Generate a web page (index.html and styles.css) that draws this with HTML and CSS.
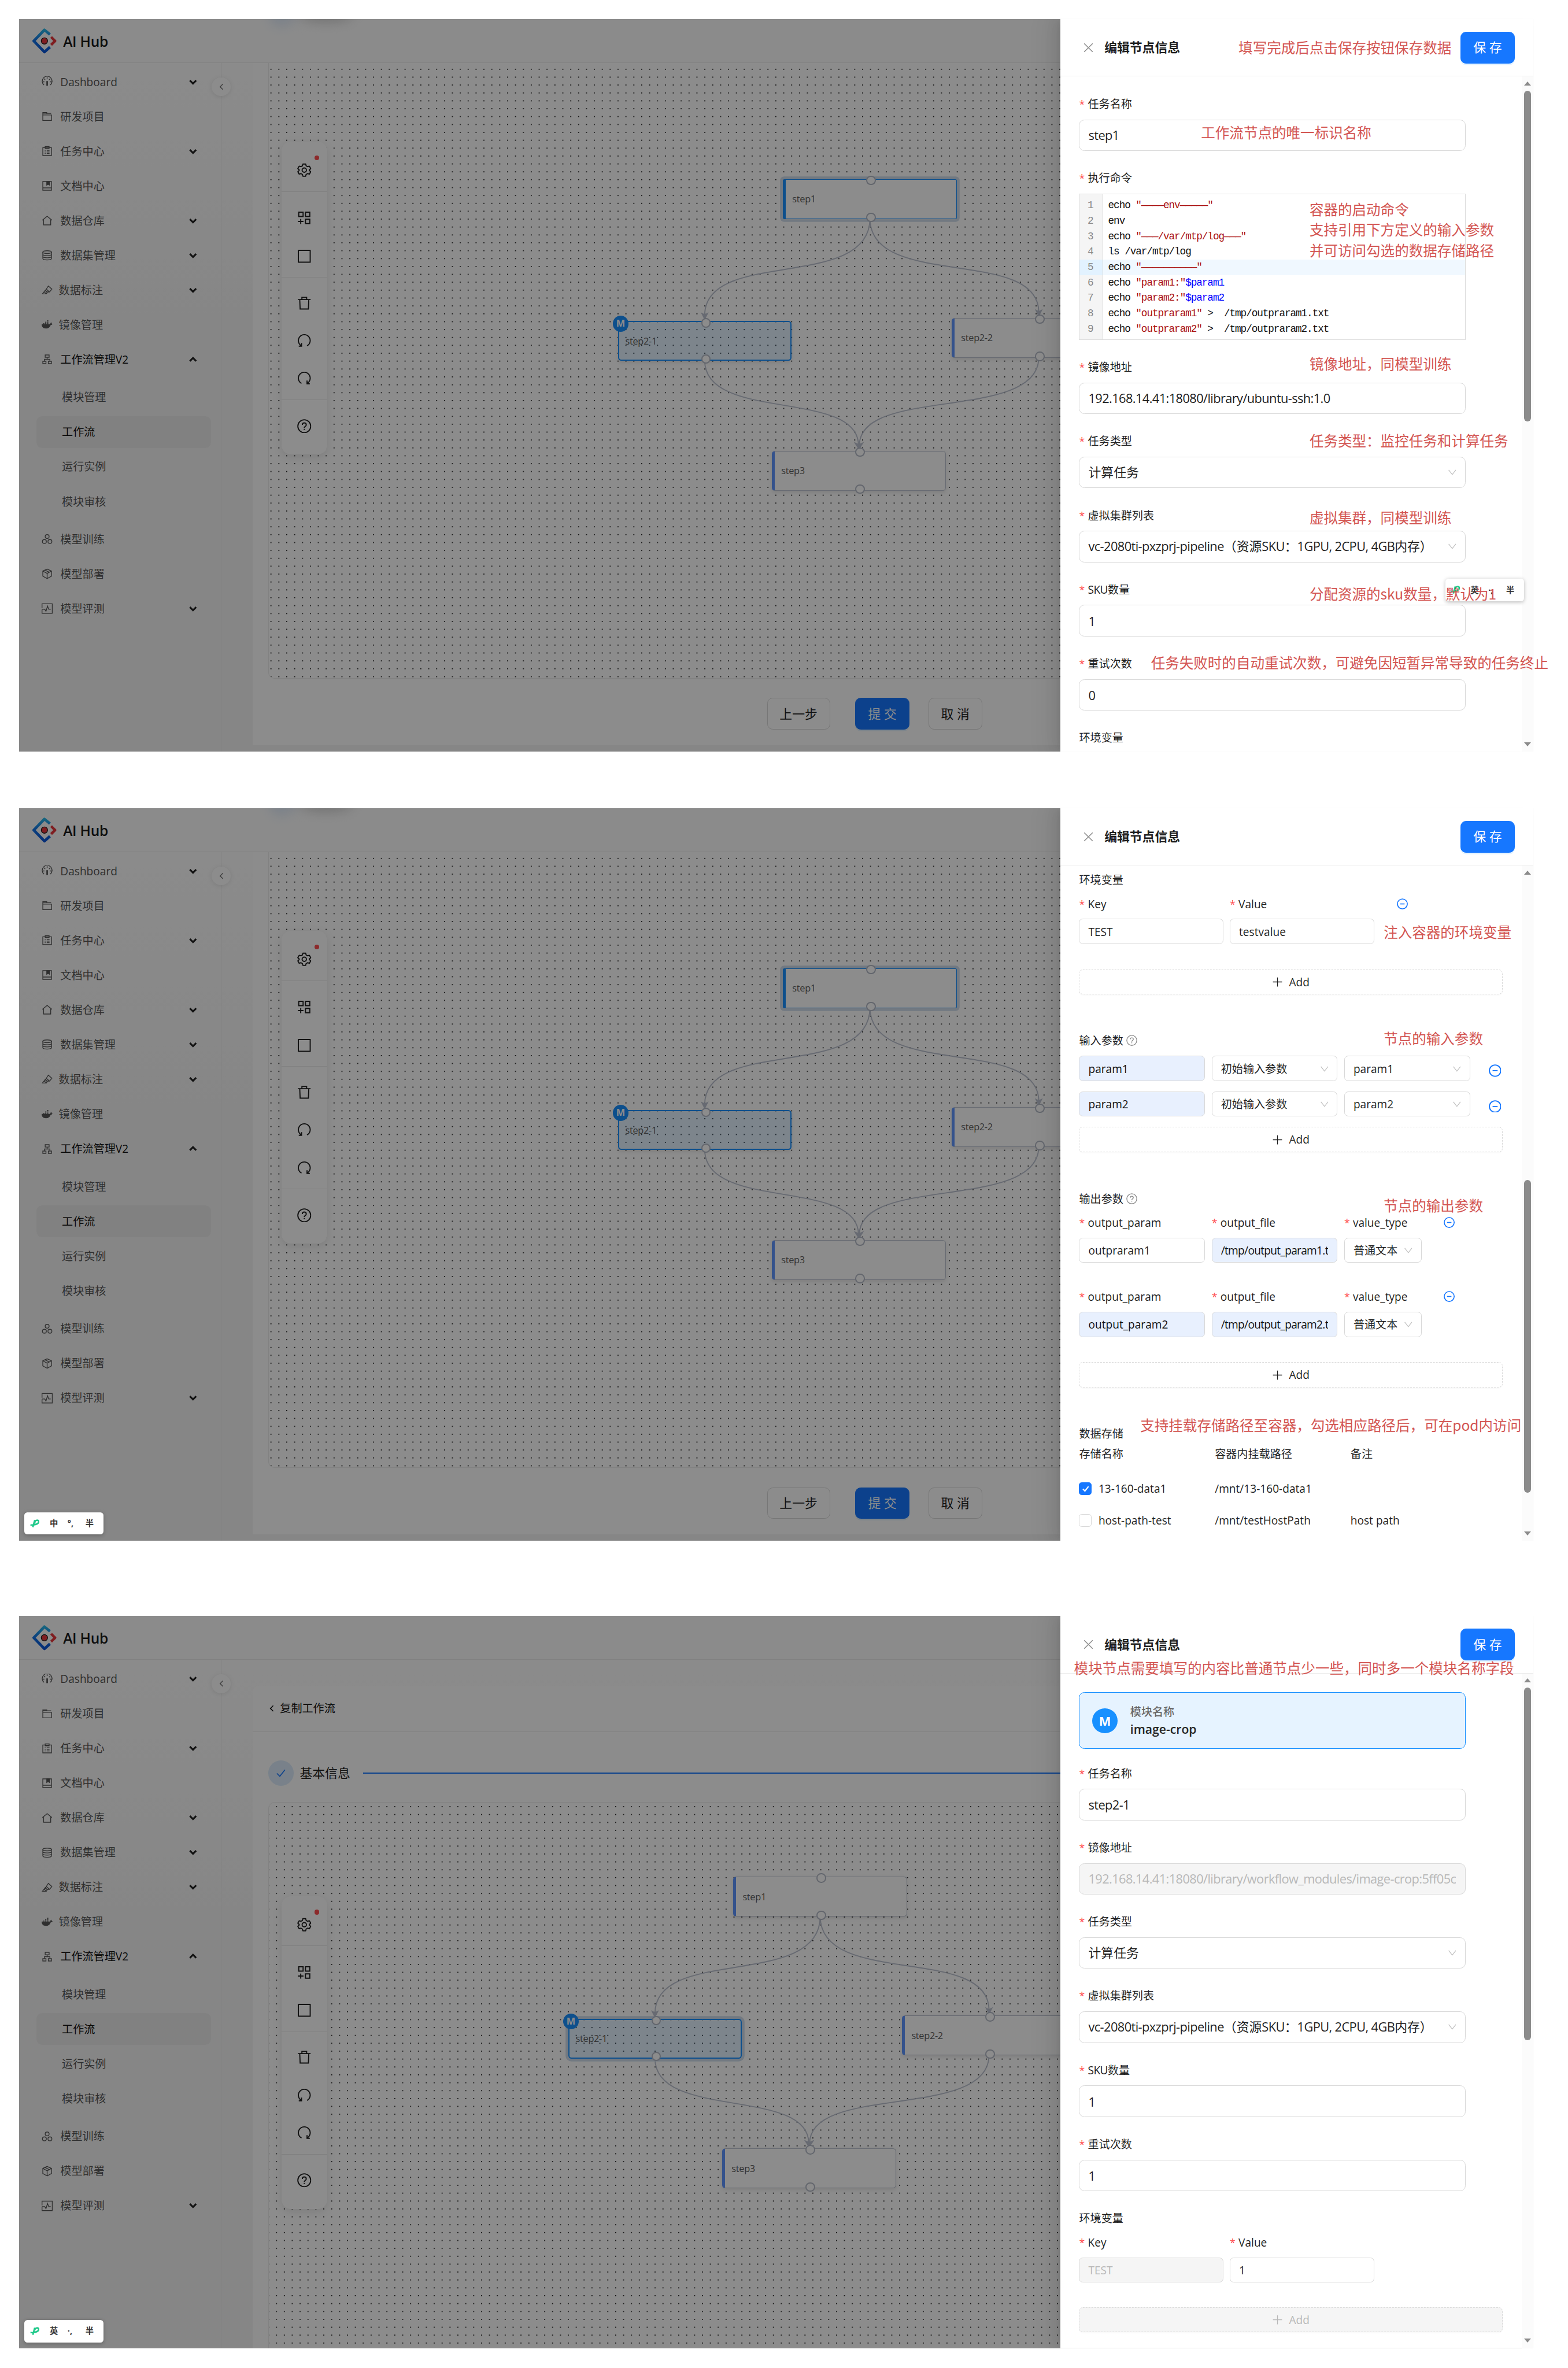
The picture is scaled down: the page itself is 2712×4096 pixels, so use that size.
FILE: index.html
```html
<!DOCTYPE html>
<html lang="zh-CN">
<head>
<meta charset="utf-8">
<title>AI Hub</title>
<link rel="stylesheet" href="styles.css">
</head>
<body>
<svg class="defs" width="0" height="0" aria-hidden="true">
  <defs>
    <linearGradient id="logo-blue" x1="0" y1="0" x2="0" y2="1"><stop offset="0" stop-color="#2bb8e8"/><stop offset=".45" stop-color="#1677e6"/><stop offset="1" stop-color="#0a55d8"/></linearGradient>
    <pattern id="dots" x="4" y="14.5" width="20" height="20" patternUnits="userSpaceOnUse"><rect width="1.6" height="1.6" fill="#c6c6c6"/></pattern>
    <symbol id="i-logo" viewBox="0 0 64 64"><g fill="none" stroke-linejoin="round"><path d="M46 15.500L32 4 5 32l27 28 14-12.500" stroke="url(#logo-blue)" stroke-width="7"/><path d="M49 22l10 10-10 10" stroke="#e8383d" stroke-width="6.500"/></g><circle cx="32" cy="32" r="8" fill="#e8383d"/></symbol>
    <symbol id="i-dash" viewBox="0 0 28 28"><path d="M6 22A12.500 12.500 0 1 1 22 22M14 2v4M3 14h4M21 14h4M6 6l3 3M22 6l-3 3"/><path d="M14 12v12" stroke-width="4"/></symbol>
    <symbol id="i-folder" viewBox="0 0 28 28"><path d="M3 24V10h22v14zM2 10h24M3 10V4h10v2h11"/><path d="M3 5h10" stroke-width="3"/></symbol>
    <symbol id="i-task" viewBox="0 0 28 28"><path d="M3 5h22v20H3zM9 2h10v5H9zM8 12h2M13 12h7M8 16h2M13 16h7M8 20h2M13 20h7"/></symbol>
    <symbol id="i-book" viewBox="0 0 28 28"><path d="M3 3h22v22H3zM3 19h22"/><path d="M13 3h7v9l-3.500-2.500L13 12z" fill="currentColor"/></symbol>
    <symbol id="i-home" viewBox="0 0 28 28"><path d="M2 13L14 3l12 10M5 12v13h18V12"/></symbol>
    <symbol id="i-db" viewBox="0 0 28 28"><ellipse cx="14" cy="6" rx="11" ry="3.500"/><path d="M3 6v16c0 5 22 5 22 0V6M3 11.500c0 4.500 22 4.500 22 0M3 17c0 4.500 22 4.500 22 0"/></symbol>
    <symbol id="i-mark" viewBox="0 0 28 28"><path d="M17 4l9 8-6 7h-7l-3-4zM10 14l-8 10h10l3-5M12 12l8 7M7 19l4 4"/></symbol>
    <symbol id="i-docker" viewBox="0 0 28 28"><path d="M0 13h22c0-3 1-4 2-5 1 1 2 2 1.500 3.500L28 12c-1 2-3 3-5 3-2 6-6 9-12 9C4 24 0 20 0 13z" fill="currentColor" stroke="none"/><path d="M4 11.500h4M9 11.500h4M14 11.500h4M9 8h4M14 8h4M14 4.500h4" stroke-width="2.800" stroke-dasharray="3 1"/></symbol>
    <symbol id="i-flow" viewBox="0 0 28 28"><path d="M9 3h10v6H9zM3 19h8v6H3zM17 19h8v6h-8zM14 9v5M7 19v-5h14v5"/></symbol>
    <symbol id="i-balls" viewBox="0 0 28 28"><circle cx="14" cy="7.500" r="5"/><circle cx="7" cy="20" r="5"/><circle cx="21" cy="20" r="5"/></symbol>
    <symbol id="i-box" viewBox="0 0 28 28"><path d="M14 2l11 5v13l-11 6L3 20V7zM3 7l11 6 11-6M14 13v13M8.500 4.500l11 5.500"/></symbol>
    <symbol id="i-pulse" viewBox="0 0 28 28"><path d="M1 13V2h26v24H1v-9M1 16h7l3 5 4-13 3 8h5"/></symbol>
    <symbol id="i-down" viewBox="0 0 20 20"><path d="M2 6l8 8 8-8"/></symbol>
    <symbol id="i-up" viewBox="0 0 20 20"><path d="M2 14l8-8 8 8"/></symbol>
    <symbol id="i-left" viewBox="0 0 20 20"><path d="M14 2L6 10l8 8"/></symbol>
    <symbol id="i-gear" viewBox="0 0 36 36"><path d="M14.500 2.500h7l1.200 4.600 3.600 2.100 4.600-1.300 3.500 6-3.400 3.300v1.600l3.400 3.300-3.500 6-4.600-1.300-3.600 2.100-1.200 4.600h-7l-1.200-4.600-3.600-2.100-4.600 1.300-3.500-6L5 18.800v-1.600l-3.400-3.300 3.500-6 4.600 1.300 3.600-2.100z" stroke-linejoin="round"/><circle cx="18" cy="18" r="5.500"/></symbol>
    <symbol id="i-add" viewBox="0 0 36 36"><path d="M4 3h11v11H4zM21 3h11v11H21zM21 21h11v11H21zM9 20v13M2 26.500h14"/></symbol>
    <symbol id="i-rect" viewBox="0 0 36 36"><path d="M3 3h30v30H3z"/></symbol>
    <symbol id="i-trash" viewBox="0 0 36 36"><path d="M2 9h32M12 9V3.500h12V9M6.500 9l1 24h21l1-24"/></symbol>
    <symbol id="i-undo" viewBox="0 0 36 36"><path d="M11 31A15 15 0 1 1 25 31M11 24v8H4"/></symbol>
    <symbol id="i-redo" viewBox="0 0 36 36"><path d="M25 31A15 15 0 1 0 11 31M25 24v8h7"/></symbol>
    <symbol id="i-help" viewBox="0 0 36 36"><circle cx="18" cy="18" r="16.300"/><path d="M13 14.500c0-6.500 10-6.500 10 0 0 4-5 3.500-5 7.500M18 24.500v3"/></symbol>
    <symbol id="i-close" viewBox="0 0 28 28"><path d="M2 2l24 24M26 2L2 26"/></symbol>
    <symbol id="i-caret" viewBox="0 0 22 16"><path d="M1 1l10 13L21 1"/></symbol>
    <symbol id="i-plus" viewBox="0 0 26 26"><path d="M13 1v24M1 13h24"/></symbol>
    <symbol id="i-minus" viewBox="0 0 30 30"><circle cx="15" cy="15" r="13.500"/><path d="M9 15h12"/></symbol>
    <symbol id="i-check" viewBox="0 0 28 28"><path d="M3 15l8 8L25 5"/></symbol>
    <symbol id="i-ime" viewBox="0 0 24 22"><path d="M1 14c6 1 21-1 21-8 0-6-11-4-10 3M12 2L7 20" fill="none" stroke="#1fc98a" stroke-width="4"/></symbol>
    <g id="edges">
      <rect width="2300" height="1800" fill="url(#dots)"/>
      <g fill="none" stroke="#bcc2cf" stroke-width="2.800">
        <path d="M1524 394C1524 579 1105 469 1105 640"/><path d="M1524 394C1524 575 1952 465 1952 632"/>
        <path d="M1105 754C1105 911 1495 826 1495 970"/><path d="M1952 746C1952 911 1497 818 1497 970"/>
      </g>
      <g fill="#bcc2cf"><path d="M1095 632l10 5 10-5-10 20z"/><path d="M1942 624l10 5 10-5-10 20z"/><path d="M1483 961l13 5 13-5-13 20z"/></g>
    </g>
  </defs>
</svg>

<main class="page">

<!-- ============ node form, top ============ -->
<section class="frame">
  <header class="header"><svg class="logo"><use href="#i-logo"/></svg><b class="brand">AI Hub</b><i class="ghost ghost-dot"></i><i class="ghost ghost-text"></i></header>
  <div class="body">
    <nav class="side">
      <a class="item"><svg><use href="#i-dash"/></svg><span>Dashboard</span><svg class="chev"><use href="#i-down"/></svg></a>
      <a class="item"><svg><use href="#i-folder"/></svg><span>研发项目</span></a>
      <a class="item"><svg><use href="#i-task"/></svg><span>任务中心</span><svg class="chev"><use href="#i-down"/></svg></a>
      <a class="item"><svg><use href="#i-book"/></svg><span>文档中心</span></a>
      <a class="item"><svg><use href="#i-home"/></svg><span>数据仓库</span><svg class="chev"><use href="#i-down"/></svg></a>
      <a class="item"><svg><use href="#i-db"/></svg><span>数据集管理</span><svg class="chev"><use href="#i-down"/></svg></a>
      <a class="item tight"><svg><use href="#i-mark"/></svg><span>数据标注</span><svg class="chev"><use href="#i-down"/></svg></a>
      <a class="item tight"><svg><use href="#i-docker"/></svg><span>镜像管理</span></a>
      <a class="item open"><svg><use href="#i-flow"/></svg><span>工作流管理V2</span><svg class="chev"><use href="#i-up"/></svg></a>
      <div class="sub"><a>模块管理</a><a class="on">工作流</a><a>运行实例</a><a>模块审核</a></div>
      <a class="item"><svg><use href="#i-balls"/></svg><span>模型训练</span></a>
      <a class="item"><svg><use href="#i-box"/></svg><span>模型部署</span></a>
      <a class="item"><svg><use href="#i-pulse"/></svg><span>模型评测</span><svg class="chev"><use href="#i-down"/></svg></a>
      <i class="fold"><svg><use href="#i-left"/></svg></i>
    </nav>
    <div class="main">
      <div class="card scrolled">
        <div class="canvas">
          <div class="graph">
            <svg class="wires"><use href="#edges"/></svg>
            <div class="node n1 sel">step1</div><div class="node n2 module">step2-1<b class="badge">M</b></div><div class="node n3">step2-2</div><div class="node n4">step3</div>
          </div>
          <div class="tools">
            <div><svg><use href="#i-gear"/></svg><i class="red"></i></div>
            <div><svg><use href="#i-add"/></svg><svg><use href="#i-rect"/></svg></div>
            <div><svg><use href="#i-trash"/></svg><svg><use href="#i-undo"/></svg><svg><use href="#i-redo"/></svg></div>
            <div><svg><use href="#i-help"/></svg></div>
          </div>
        </div>
        <div class="actions"><button class="btn wide">上一步</button><button class="btn primary">提 交</button><button class="btn">取 消</button></div>
      </div>
    </div>
  </div>
  <div class="mask"></div>
  <aside class="drawer">
    <div class="dhead"><svg><use href="#i-close"/></svg><b>编辑节点信息</b><button class="btn primary">保 存</button></div>
    <div class="dbody">
      <div class="form">
        <label class="lab"><i>*</i>任务名称</label><div class="inp"><span class="en">step1</span></div>
        <label class="lab"><i>*</i>执行命令</label>
        <div class="code">
          <div><i>1</i><pre>echo <s>"————env—————"</s></pre></div>
          <div><i>2</i><pre>env</pre></div>
          <div><i>3</i><pre>echo <s>"———/var/mtp/log———"</s></pre></div>
          <div><i>4</i><pre>ls /var/mtp/log</pre></div>
          <div class="cur"><i>5</i><pre>echo <s>"——————————"</s></pre></div>
          <div><i>6</i><pre>echo <s>"param1:"</s><u>$param1</u></pre></div>
          <div><i>7</i><pre>echo <s>"param2:"</s><u>$param2</u></pre></div>
          <div><i>8</i><pre>echo <s>"outpraram1"</s> &gt;  /tmp/outpraram1.txt</pre></div>
          <div><i>9</i><pre>echo <s>"outpraram2"</s> &gt;  /tmp/outpraram2.txt</pre></div>
        </div>
        <label class="lab"><i>*</i>镜像地址</label><div class="inp"><span class="en">192.168.14.41:18080/library/ubuntu-ssh:1.0</span></div>
        <label class="lab"><i>*</i>任务类型</label><div class="inp">计算任务<svg class="car"><use href="#i-caret"/></svg></div>
        <label class="lab"><i>*</i>虚拟集群列表</label><div class="inp"><span><span class="en">vc-2080ti-pxzprj-pipeline</span>（资源<span class="en">SKU</span>：<span class="en">1GPU, 2CPU, 4GB</span>内存）</span><svg class="car"><use href="#i-caret"/></svg></div>
        <label class="lab"><i>*</i><span class="en">SKU</span>数量</label><div class="inp num">1</div>
        <label class="lab"><i>*</i>重试次数</label><div class="inp num">0</div>
        <label class="lab">环境变量</label>
      </div>
      <div class="bar"><i class="tri"></i><i class="thumb t1"></i><i class="tri dn"></i></div>
    </div>
  </aside>
  <div class="ime ime-a"><svg><use href="#i-ime"/></svg><b>英</b><b>·,</b><b>半</b></div>
  <p class="note a1">填写完成后点击保存按钮保存数据</p>
  <p class="note a2">工作流节点的唯一标识名称</p>
  <p class="tiny">工作流节点的唯一标识名称</p>
  <p class="note a3">容器的启动命令<br>支持引用下方定义的输入参数<br>并可访问勾选的数据存储路径</p>
  <p class="note a4">镜像地址，同模型训练</p>
  <p class="note a5">任务类型：监控任务和计算任务</p>
  <p class="note a6">虚拟集群，同模型训练</p>
  <p class="note a7">分配资源的sku数量，默认为1</p>
  <p class="note a8">任务失败时的自动重试次数，可避免因短暂异常导致的任务终止</p>
</section>

<!-- ============ node form, bottom ============ -->
<section class="frame">
  <header class="header"><svg class="logo"><use href="#i-logo"/></svg><b class="brand">AI Hub</b><i class="ghost ghost-dot"></i><i class="ghost ghost-text"></i></header>
  <div class="body">
    <nav class="side">
      <a class="item"><svg><use href="#i-dash"/></svg><span>Dashboard</span><svg class="chev"><use href="#i-down"/></svg></a>
      <a class="item"><svg><use href="#i-folder"/></svg><span>研发项目</span></a>
      <a class="item"><svg><use href="#i-task"/></svg><span>任务中心</span><svg class="chev"><use href="#i-down"/></svg></a>
      <a class="item"><svg><use href="#i-book"/></svg><span>文档中心</span></a>
      <a class="item"><svg><use href="#i-home"/></svg><span>数据仓库</span><svg class="chev"><use href="#i-down"/></svg></a>
      <a class="item"><svg><use href="#i-db"/></svg><span>数据集管理</span><svg class="chev"><use href="#i-down"/></svg></a>
      <a class="item tight"><svg><use href="#i-mark"/></svg><span>数据标注</span><svg class="chev"><use href="#i-down"/></svg></a>
      <a class="item tight"><svg><use href="#i-docker"/></svg><span>镜像管理</span></a>
      <a class="item open"><svg><use href="#i-flow"/></svg><span>工作流管理V2</span><svg class="chev"><use href="#i-up"/></svg></a>
      <div class="sub"><a>模块管理</a><a class="on">工作流</a><a>运行实例</a><a>模块审核</a></div>
      <a class="item"><svg><use href="#i-balls"/></svg><span>模型训练</span></a>
      <a class="item"><svg><use href="#i-box"/></svg><span>模型部署</span></a>
      <a class="item"><svg><use href="#i-pulse"/></svg><span>模型评测</span><svg class="chev"><use href="#i-down"/></svg></a>
      <i class="fold"><svg><use href="#i-left"/></svg></i>
    </nav>
    <div class="main">
      <div class="card scrolled">
        <div class="canvas">
          <div class="graph">
            <svg class="wires"><use href="#edges"/></svg>
            <div class="node n1 sel">step1</div><div class="node n2 module">step2-1<b class="badge">M</b></div><div class="node n3">step2-2</div><div class="node n4">step3</div>
          </div>
          <div class="tools">
            <div><svg><use href="#i-gear"/></svg><i class="red"></i></div>
            <div><svg><use href="#i-add"/></svg><svg><use href="#i-rect"/></svg></div>
            <div><svg><use href="#i-trash"/></svg><svg><use href="#i-undo"/></svg><svg><use href="#i-redo"/></svg></div>
            <div><svg><use href="#i-help"/></svg></div>
          </div>
        </div>
        <div class="actions"><button class="btn wide">上一步</button><button class="btn primary">提 交</button><button class="btn">取 消</button></div>
      </div>
    </div>
  </div>
  <div class="mask"></div>
  <aside class="drawer">
    <div class="dhead"><svg><use href="#i-close"/></svg><b>编辑节点信息</b><button class="btn primary">保 存</button></div>
    <div class="dbody">
      <div class="form small">
        <label class="lab">环境变量</label>
        <div class="labs kv"><label class="lab"><i>*</i>Key</label><label class="lab"><i>*</i>Value</label><svg class="del"><use href="#i-minus"/></svg></div>
        <div class="row kv"><div class="inp">TEST</div><div class="inp">testvalue</div></div>
        <div class="add far"><svg><use href="#i-plus"/></svg>Add</div>
        <label class="lab sec">输入参数<svg class="q"><use href="#i-help"/></svg></label>
        <div class="row in first"><div class="inp fill">param1</div><div class="inp">初始输入参数<svg class="car"><use href="#i-caret"/></svg></div><div class="inp">param1<svg class="car"><use href="#i-caret"/></svg></div><svg class="del big"><use href="#i-minus"/></svg></div>
        <div class="row in"><div class="inp fill">param2</div><div class="inp">初始输入参数<svg class="car"><use href="#i-caret"/></svg></div><div class="inp">param2<svg class="car"><use href="#i-caret"/></svg></div><svg class="del big"><use href="#i-minus"/></svg></div>
        <div class="add"><svg><use href="#i-plus"/></svg>Add</div>
        <label class="lab sec out">输出参数<svg class="q"><use href="#i-help"/></svg></label>
        <div class="labs op"><label class="lab"><i>*</i>output_param</label><label class="lab"><i>*</i>output_file</label><label class="lab"><i>*</i>value_type</label><svg class="del"><use href="#i-minus"/></svg></div>
        <div class="row op"><div class="inp">outpraram1</div><div class="inp fill"><span class="clip">/tmp/output_param1.txt</span></div><div class="inp">普通文本<svg class="car"><use href="#i-caret"/></svg></div></div>
        <div class="labs op next"><label class="lab"><i>*</i>output_param</label><label class="lab"><i>*</i>output_file</label><label class="lab"><i>*</i>value_type</label><svg class="del"><use href="#i-minus"/></svg></div>
        <div class="row op"><div class="inp fill">output_param2</div><div class="inp fill"><span class="clip">/tmp/output_param2.txt</span></div><div class="inp">普通文本<svg class="car"><use href="#i-caret"/></svg></div></div>
        <div class="add far"><svg><use href="#i-plus"/></svg>Add</div>
        <label class="lab sec store">数据存储</label>
        <div class="tr th"><span>存储名称</span><span>容器内挂载路径</span><span>备注</span></div>
        <div class="tr r1"><span><i class="box on"><svg><use href="#i-check"/></svg></i>13-160-data1</span><span>/mnt/13-160-data1</span><span></span></div>
        <div class="tr r2"><span><i class="box"></i>host-path-test</span><span>/mnt/testHostPath</span><span>host path</span></div>
      </div>
      <div class="bar"><i class="tri"></i><i class="thumb t2"></i><i class="tri dn"></i></div>
    </div>
  </aside>
  <div class="ime"><svg><use href="#i-ime"/></svg><b>中</b><b>°,</b><b>半</b></div>
  <p class="note b1">注入容器的环境变量</p>
  <p class="note b2">节点的输入参数</p>
  <p class="note b3">节点的输出参数</p>
  <p class="note b4">支持挂载存储路径至容器，勾选相应路径后，可在pod内访问</p>
</section>

<!-- ============ module node form ============ -->
<section class="frame third">
  <header class="header"><svg class="logo"><use href="#i-logo"/></svg><b class="brand">AI Hub</b></header>
  <div class="body">
    <nav class="side">
      <a class="item"><svg><use href="#i-dash"/></svg><span>Dashboard</span><svg class="chev"><use href="#i-down"/></svg></a>
      <a class="item"><svg><use href="#i-folder"/></svg><span>研发项目</span></a>
      <a class="item"><svg><use href="#i-task"/></svg><span>任务中心</span><svg class="chev"><use href="#i-down"/></svg></a>
      <a class="item"><svg><use href="#i-book"/></svg><span>文档中心</span></a>
      <a class="item"><svg><use href="#i-home"/></svg><span>数据仓库</span><svg class="chev"><use href="#i-down"/></svg></a>
      <a class="item"><svg><use href="#i-db"/></svg><span>数据集管理</span><svg class="chev"><use href="#i-down"/></svg></a>
      <a class="item tight"><svg><use href="#i-mark"/></svg><span>数据标注</span><svg class="chev"><use href="#i-down"/></svg></a>
      <a class="item tight"><svg><use href="#i-docker"/></svg><span>镜像管理</span></a>
      <a class="item open"><svg><use href="#i-flow"/></svg><span>工作流管理V2</span><svg class="chev"><use href="#i-up"/></svg></a>
      <div class="sub"><a>模块管理</a><a class="on">工作流</a><a>运行实例</a><a>模块审核</a></div>
      <a class="item"><svg><use href="#i-balls"/></svg><span>模型训练</span></a>
      <a class="item"><svg><use href="#i-box"/></svg><span>模型部署</span></a>
      <a class="item"><svg><use href="#i-pulse"/></svg><span>模型评测</span><svg class="chev"><use href="#i-down"/></svg></a>
      <i class="fold"><svg><use href="#i-left"/></svg></i>
    </nav>
    <div class="main">
      <div class="card top">
        <div class="crumb"><svg><use href="#i-left"/></svg>复制工作流</div>
        <div class="steps"><i><svg><use href="#i-check"/></svg></i>基本信息<hr></div>
        <div class="canvas">
          <div class="graph moved">
            <svg class="wires"><use href="#edges"/></svg>
            <div class="node n1">step1</div><div class="node n2 module sel">step2-1<b class="badge">M</b></div><div class="node n3">step2-2</div><div class="node n4">step3</div>
          </div>
          <div class="tools low">
            <div><svg><use href="#i-gear"/></svg><i class="red"></i></div>
            <div><svg><use href="#i-add"/></svg><svg><use href="#i-rect"/></svg></div>
            <div><svg><use href="#i-trash"/></svg><svg><use href="#i-undo"/></svg><svg><use href="#i-redo"/></svg></div>
            <div><svg><use href="#i-help"/></svg></div>
          </div>
        </div>
      </div>
    </div>
  </div>
  <div class="mask"></div>
  <aside class="drawer">
    <div class="dhead"><svg><use href="#i-close"/></svg><b>编辑节点信息</b><button class="btn primary">保 存</button></div>
    <div class="dbody">
      <div class="form">
        <div class="module-card"><b class="m">M</b><div><span>模块名称</span><strong>image-crop</strong></div></div>
        <label class="lab"><i>*</i>任务名称</label><div class="inp"><span class="en">step2-1</span></div>
        <label class="lab"><i>*</i>镜像地址</label><div class="inp off"><span class="en clip">192.168.14.41:18080/library/workflow_modules/image-crop:5ff05c</span></div>
        <label class="lab"><i>*</i>任务类型</label><div class="inp">计算任务<svg class="car"><use href="#i-caret"/></svg></div>
        <label class="lab"><i>*</i>虚拟集群列表</label><div class="inp"><span><span class="en">vc-2080ti-pxzprj-pipeline</span>（资源<span class="en">SKU</span>：<span class="en">1GPU, 2CPU, 4GB</span>内存）</span><svg class="car"><use href="#i-caret"/></svg></div>
        <label class="lab"><i>*</i><span class="en">SKU</span>数量</label><div class="inp num">1</div>
        <label class="lab"><i>*</i>重试次数</label><div class="inp num">1</div>
        <label class="lab">环境变量</label>
        <div class="labs kv"><label class="lab"><i>*</i>Key</label><label class="lab"><i>*</i>Value</label></div>
        <div class="row kv"><div class="inp off">TEST</div><div class="inp">1</div></div>
        <div class="add far off"><svg><use href="#i-plus"/></svg>Add</div>
      </div>
      <div class="bar"><i class="tri"></i><i class="thumb t3"></i><i class="tri dn"></i></div>
    </div>
  </aside>
  <div class="ime"><svg><use href="#i-ime"/></svg><b>英</b><b>·,</b><b>半</b></div>
  <p class="note c1">模块节点需要填写的内容比普通节点少一些，同时多一个模块名称字段</p>
</section>

</main>
</body>
</html>
```
FILE: styles.css
```css
* { box-sizing: border-box; }
html { overflow: hidden; background: #fff; }
body { margin: 0; zoom: 0.6822; font: 28px/44px "Open Sans", "Noto Sans CJK SC", sans-serif; color: #1f1f1f; }
p, pre { margin: 0; }
i { font-style: normal; }
svg { fill: none; stroke: currentColor; stroke-width: 2; flex: none; }
.defs { position: absolute; }
button { font: inherit; }
.en { letter-spacing: -.028em; }

.page { width: 3975px; height: 6003px; padding: 48px 87px 0 48px; overflow: hidden; }
.frame { position: relative; width: 3840px; height: 1858px; margin-bottom: 143px; display: flex; flex-direction: column; background: linear-gradient(#fff 0, #f5f5f5 750px); }
.frame + .frame { margin-bottom: 190px; }
.frame.third { margin-bottom: 0; height: 1857px; }

/* top bar */
.header { position: relative; height: 112px; flex: none; padding: 2px 0 0 32px; display: flex; align-items: center; gap: 16px; background: #fefefe; border-bottom: 2px solid #ebebeb; overflow: hidden; }
.logo { width: 64px; height: 64px; }
.brand { font-size: 36px; font-weight: 600; color: #1b1b1b; letter-spacing: -.01em; padding-top: 2px; }
.ghost { position: absolute; border-radius: 50%; filter: blur(18px); }
.ghost-dot { left: 636px; top: -44px; width: 60px; height: 60px; background: #d8e6f8; }
.ghost-text { left: 712px; top: -30px; width: 136px; height: 34px; background: #c4c4c4; }

/* side menu */
.body { display: flex; flex: 1; min-height: 0; }
.side { position: relative; width: 514px; padding: 8px 25px 0 44px; border-right: 2px solid #ebebeb; flex: none; }
.item { display: flex; align-items: center; height: 80px; margin-bottom: 8px; padding: 0 36px 0 14px; color: #575757; }
.item svg { width: 28px; height: 28px; margin-right: 19px; }
.item.tight svg:first-child { margin-right: 15px; }
.item.open span { color: #111; }
.item .chev { width: 20px; height: 20px; margin: 0 0 0 auto; color: #222; stroke-width: 4.500; }
.sub { padding: 8px 0; }
.sub a { display: flex; align-items: center; height: 80px; margin-bottom: 8px; padding-left: 65px; border-radius: 14px; color: #575757; }
.sub .on { background: #ececec; color: #111; }
.fold { position: absolute; left: 489px; top: 36px; width: 48px; height: 48px; border-radius: 50%; background: #fff; box-shadow: 0 2px 12px rgba(0,0,0,.1); display: flex; align-items: center; justify-content: center; color: #777; }
.fold svg { width: 18px; height: 18px; stroke-width: 2.400; }

/* workflow card */
.main { flex: 1; min-width: 0; padding: 0 93px 0 78px; overflow: hidden; }
.card { background: #fff; padding: 0 40px; }
.scrolled { height: 1730px; display: flex; flex-direction: column; }
.canvas { position: relative; border: 2px solid #ededed; overflow: hidden; }
.scrolled .canvas { height: 1561px; border-top: 0; border-radius: 0 0 16px 16px; }
.actions { display: flex; justify-content: center; padding: 49px 0 0; }
.btn { width: 137px; height: 80px; border: 2px solid #d9d9d9; border-radius: 14px; background: #fff; font-size: 32px; color: #1f1f1f; padding: 0; flex: none; }
.btn.wide { width: 160px; margin-right: 64px; }
.btn.primary { background: #1677ff; border-color: #1677ff; color: #fff; box-shadow: 0 4px 0 rgba(5,145,255,.1); }
.actions .primary { margin-right: 48px; }
.top { margin-top: 65px; border-radius: 16px 16px 0 0; padding: 0; }
.top .canvas { margin: 0 40px; height: 1500px; border-radius: 16px 16px 0 0; }
.crumb { display: flex; align-items: center; height: 118px; padding-left: 40px; gap: 12px; border-bottom: 2px solid #ebebeb; color: #111; }
.crumb svg { width: 18px; height: 18px; stroke-width: 2.600; }
.steps { display: flex; align-items: center; height: 177px; padding: 30px 0 0 40px; font-size: 32px; color: #1f1f1f; }
.steps i { display: flex; align-items: center; justify-content: center; width: 64px; height: 64px; border-radius: 50%; background: #dcecfb; margin-right: 16px; color: #1677ff; }
.steps svg { width: 26px; height: 26px; stroke-width: 2.600; }
.steps hr { flex: 1; height: 3px; margin: 0 0 0 32px; border: 0; background: #1677ff; }

/* graph */
.graph { position: absolute; left: 0; top: 0; width: 2300px; height: 1800px; }
.graph.moved { left: -126px; top: -106px; }
.wires { display: block; width: 2300px; height: 1800px; stroke: none; }
.node { position: absolute; width: 440px; height: 101px; padding: 0 0 0 16px; display: flex; align-items: center; font-size: 24px; letter-spacing: -.02em; color: #5c5c5c; background: #fff; border: 2px solid #bcc2cf; border-left: 8px solid #5f95ff; border-radius: 8px; box-shadow: 0 4px 10px rgba(0,0,0,.1); }
.node::before, .node::after { content: ""; position: absolute; left: 50%; margin-left: -12px; width: 18px; height: 18px; border: 3px solid #b4bac7; border-radius: 50%; background: #fff; }
.node::before { top: -10px; }
.node::after { bottom: -10px; }
.node.sel { border-color: #1890ff; border-radius: 4px; box-shadow: 0 0 0 7px #cfdcec; }
.node.module { padding-left: 16px; background: rgba(24,144,255,.12); border: 4px solid #1890ff; border-radius: 8px; }
.node.module::before, .node.module::after { margin-left: -9px; }
.n1 { left: 1304px; top: 294px; }
.n2 { left: 885px; top: 654px; }
.n3 { left: 1732px; top: 646px; }
.n4 { left: 1276px; top: 983px; }
.badge { position: absolute; left: -16px; top: -16px; width: 40px; height: 40px; line-height: 40px; text-align: center; border-radius: 50%; background: #1890ff; color: #fff; font-size: 24px; }

.tools { position: absolute; left: 32px; top: 199px; width: 116px; background: #fff; border-radius: 24px; box-shadow: 0 6px 24px rgba(0,0,0,.1); color: #1f1f1f; }
.tools.low { top: 237px; }
.tools div { position: relative; display: flex; flex-direction: column; align-items: center; gap: 60px; padding: 46px 0 35px; border-bottom: 2px solid #eaeaea; }
.tools div:first-child { padding: 55px 0 35px; }
.tools div:nth-child(2) { padding: 49px 0 35px; }
.tools div:last-child { padding: 48px 0 54px; border: 0; }
.tools svg { width: 36px; height: 36px; stroke-width: 2.800; }
.red { position: absolute; left: 84px; top: 35px; width: 12px; height: 12px; border-radius: 50%; background: #ff4d4f; }

.mask { position: absolute; inset: 0; background: rgba(0,0,0,.45); }

/* drawer */
.drawer { position: absolute; right: 0; top: 0; width: 1200px; height: 100%; display: flex; flex-direction: column; background: #fff; clip-path: inset(0 0 0 -90px); box-shadow: -12px 0 32px rgba(0,0,0,.08), -6px 0 12px -8px rgba(0,0,0,.12), -18px 0 56px 16px rgba(0,0,0,.05); }
.dhead { height: 146px; flex: none; display: flex; align-items: center; padding: 1px 48px 0 59px; border-bottom: 2px solid #ececec; }
.dhead > svg { width: 25px; height: 25px; color: #8a8a8a; stroke-width: 2.400; margin-right: 28px; }
.dhead b { font-size: 32px; font-weight: 700; color: #1f1f1f; margin-right: auto; }
.dbody { flex: 1; min-height: 0; display: flex; }
.form { flex: 1; min-width: 0; padding: 48px 0 0 48px; overflow: hidden; }
.lab { display: flex; align-items: center; height: 44px; margin-bottom: 17px; }
.lab i { width: 22px; color: #ff4d4f; font-size: 26px; }
.inp { display: flex; align-items: center; width: 980px; height: 80px; margin-bottom: 47px; padding: 0 22px; border: 2px solid #d9d9d9; border-radius: 14px; background: #fff; font-size: 32px; white-space: nowrap; color: #1f1f1f; }
.inp.num { padding-top: 4px; }
.car { width: 20px; height: 15px; margin-left: auto; color: #bfbfbf; }
.clip { overflow: hidden; }
.inp.off, .add.off { background: #f5f5f5; color: #b8b8b8; }

.code { width: 980px; height: 371px; margin-bottom: 47px; padding: 9px 0; border: 2px solid #ddd; font: 26px/39.200px "Liberation Mono", monospace; color: #111; background: linear-gradient(90deg, #f5f5f5 58px, #ddd 58px, #ddd 60px, #fff 60px); }
.code div { display: flex; height: 39.200px; }
.code i { width: 58px; padding-right: 3px; text-align: center; color: #888; }
.code pre { flex: 1; margin-left: 2px; padding-left: 12px; font: inherit; letter-spacing: -1.600px; }
.code s { text-decoration: none; color: #a11; }
.code u { text-decoration: none; color: #00f; }
.code .cur i { background: #e2f2ff; }
.code .cur pre { background: #f0f8ff; }

.bar { position: relative; width: 30px; background: #fbfbfb; flex: none; }
.tri { position: absolute; left: 6px; top: 12px; border: 9px solid transparent; border-top: 0; border-bottom: 11px solid #8b8b8b; }
.tri.dn { top: auto; bottom: 14px; border-top: 11px solid #8b8b8b; border-bottom: 0; }
.thumb { position: absolute; left: 6px; width: 18px; border-radius: 9px; background: #8b8b8b; }
.t1 { top: 36px; height: 838px; }
.t2 { top: 797px; height: 793px; }
.t3 { top: 36px; height: 894px; }

/* compact groups */
.small { padding-top: 14px; }
.labs { display: grid; height: 44px; margin: 1px 0 16px; align-items: center; }
.labs .lab { margin: 0; }
.row { display: grid; align-items: center; }
.row .inp { width: auto; height: 64px; margin: 0; padding-top: 2px; font-size: 28px; border-radius: 10px; }
.kv { grid-template-columns: 366px 366px 70px; column-gap: 16px; }
.op { grid-template-columns: 319px 319px 196px 70px; column-gap: 17px; }
.in { grid-template-columns: 319px 319px 319px 62px; column-gap: 17px; margin-top: 26px; }
.in.first { margin-top: 0; }
.del { width: 28px; height: 28px; color: #1677ff; stroke-width: 2.600; }
.kv .del { margin-left: 41px; }
.op .del { margin-left: 40px; }
.del.big { width: 32px; height: 32px; margin: 12px 0 0 30px; }
.next { margin-top: 64px; }
.row .inp.fill { background: #e8f0fe; color: #111; }
.row .clip { letter-spacing: -.036em; }
.add { display: flex; align-items: center; justify-content: center; width: 1074px; height: 64px; margin-top: 26px; padding-top: 1px; gap: 17px; border: 2px dashed #d9d9d9; border-radius: 10px; box-shadow: 0 3px 0 rgba(0,0,0,.02); }
.add.far { margin-top: 64px; }
.third .add.far { margin-top: 62px; }
.add svg { width: 25px; height: 25px; }
.sec { margin-top: 94px; }
.sec.out { margin-top: 97px; margin-bottom: 16px; }
.sec.store { margin-top: 95px; margin-bottom: 8px; }
.q { width: 28px; height: 28px; margin-left: 8px; color: #8a8a8a; stroke-width: 2.600; }
.tr { display: grid; grid-template-columns: 344px 344px 1fr; height: 44px; }
.tr span { display: flex; align-items: center; }
.r1 { margin-top: 44px; }
.r2 { margin-top: 37px; }
.box { display: flex; align-items: center; justify-content: center; width: 32px; height: 32px; margin-right: 17px; border: 2px solid #d9d9d9; border-radius: 7px; }
.box.on { background: #1677ff; border-color: #1677ff; color: #fff; }
.box svg { width: 20px; height: 18px; stroke-width: 5; }
.module-card { display: flex; align-items: center; width: 980px; height: 144px; margin-bottom: 40px; padding-left: 32px; gap: 32px; border: 2px solid #1890ff; border-radius: 14px; background: #e6f3ff; }
.module-card .m { width: 64px; height: 64px; line-height: 64px; text-align: center; border-radius: 50%; background: #1890ff; color: #fff; font-size: 32px; }
.module-card span, .module-card strong { display: block; }
.module-card span { font-weight: 500; color: #666; }
.module-card strong { font-size: 31px; font-weight: 600; color: #262626; }

/* input method bar */
.ime { position: absolute; left: 14px; top: 1786px; width: 200px; height: 56px; padding-left: 14px; display: flex; align-items: center; border-radius: 8px; background: #fff; box-shadow: 0 2px 10px rgba(0,0,0,.25); color: #333; }
.ime-a { left: 3616px; top: 1420px; }
.ime svg { width: 24px; height: 22px; margin-right: 26px; }
.ime b { width: 48px; font-size: 21px; font-weight: 700; }

/* red remarks */
.note { position: absolute; font: 36px/52px "Noto Sans CJK SC", sans-serif; color: #d35552; white-space: nowrap; }
.a1 { left: 3092px; top: 46px; }
.a2 { left: 2997px; top: 261px; }
.a3 { left: 3272px; top: 456px; }
.a4 { left: 3272px; top: 847px; }
.a5 { left: 3272px; top: 1042px; }
.a6 { left: 3272px; top: 1237px; }
.a7 { left: 3272px; top: 1431px; }
.a8 { left: 2870px; top: 1605px; }
.tiny { position: absolute; left: 3143px; top: 275px; font: 8px/12px "Noto Sans CJK SC", sans-serif; color: #e09a98; white-space: nowrap; }
.b1 { left: 3460px; top: 288px; }
.b2 { left: 3460px; top: 558px; }
.b3 { left: 3460px; top: 981px; }
.b4 { left: 2843px; top: 1538px; }
.c1 { left: 2675px; top: 106px; }
```
